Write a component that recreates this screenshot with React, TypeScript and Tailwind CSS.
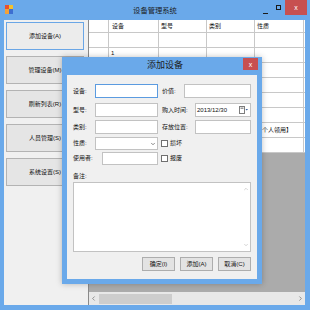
import { ChevronDown, ChevronLeft, ChevronRight, ChevronUp } from 'lucide-react'

const font = "font-['Liberation_Sans','Noto_Sans_CJK_SC',sans-serif]"

function SideButton({ label, focused }: { label: string; focused?: boolean }) {
	return (
		<div
			className={
				focused
					? 'h-[28px] w-[78px] flex items-center justify-center text-[6px] text-[#111] border border-[#6aa6e6] bg-[#ececec]'
					: 'h-[28px] w-[78px] flex items-center justify-center text-[6px] text-[#111] border border-[#b3b3b3] bg-[#e5e5e5]'
			}
		>
			{label}
		</div>
	)
}

function GridRow({ a, d, e }: { a?: string; d?: string; e?: string }) {
	return (
		<div className="flex h-[15px] shrink-0 border-b border-[#c8c8c8] bg-white text-[6px] text-[#111]">
			<div className="w-[20px] shrink-0 border-r border-[#c8c8c8]" />
			<div className="w-[50px] shrink-0 border-r border-[#c8c8c8] pl-[2px] leading-[10px]">{a}</div>
			<div className="w-[48px] shrink-0 border-r border-[#c8c8c8]" />
			<div className="w-[48px] shrink-0 border-r border-[#c8c8c8]" />
			<div className="w-[49px] shrink-0 border-r border-[#c8c8c8] pl-[1px] flex items-center whitespace-nowrap overflow-hidden">
				{d}
			</div>
			<div className="flex-1 flex items-center pl-[1px] whitespace-nowrap overflow-hidden">{e}</div>
		</div>
	)
}

function Input({ w, focused, h = 'h-[14px]' }: { w: string; focused?: boolean; h?: string }) {
	return (
		<div
			className={`${w} ${h} shrink-0 bg-white border ${focused ? 'border-[#5b9be0]' : 'border-[#c2c2c2]'}`}
		/>
	)
}

function Check({ label }: { label: string }) {
	return (
		<div className="flex items-center ml-[3px]">
			<div className="w-[7px] h-[7px] bg-white border border-[#6f6f6f]" />
			<span className="ml-[2px]">{label}</span>
		</div>
	)
}

function DlgButton({ label }: { label: string }) {
	return (
		<div className="w-[33px] h-[14px] flex items-center justify-center border border-[#adadad] bg-[#e3e3e3] text-[6px]">
			{label}
		</div>
	)
}

function AddDialog() {
	return (
		<div className="absolute left-[62px] top-[57px] w-[200px] h-[227px] bg-[#6aa9ea] flex flex-col px-[5px] pb-[5px] shadow-[0_0_6px_rgba(0,0,0,0.25)]">
			<div className="h-[18px] shrink-0 flex items-center relative">
				<div className="flex-1 text-center text-[9px] text-[#1b1b1b] pl-[6px]">添加设备</div>
				<div className="absolute right-[-1px] top-[1px] w-[15px] h-[12px] bg-[#c75050] flex items-center justify-center text-white text-[7px] leading-none">
					x
				</div>
			</div>
			<div className="flex-1 bg-[#f0f0f0] px-[6px] pt-[9px] flex flex-col text-[6px] text-[#111]">
				<div className="flex items-center">
					<span className="w-[22px] shrink-0">设备:</span>
					<Input w="w-[63px]" focused />
					<span className="w-[22px] ml-[4px] shrink-0">价值:</span>
					<Input w="w-[67px]" />
				</div>
				<div className="flex items-center mt-[5px]">
					<span className="w-[22px] shrink-0">型号:</span>
					<Input w="w-[63px]" />
					<span className="w-[33px] ml-[4px] shrink-0">购入时间:</span>
					<div className="w-[56px] h-[14px] bg-white border border-[#c2c2c2] flex items-center pl-[1px] pr-[2px]">
						<span className="flex-1 text-[6px]">2013/12/30</span>
						<svg width="9" height="8" viewBox="0 0 9 8">
							<rect x="0.5" y="0.5" width="5" height="7" fill="#fff" stroke="#7d7d7d" />
							<rect x="1.5" y="1.5" width="3" height="1.5" fill="#9a9a9a" />
							<path d="M6.5 3 L9 3 L7.75 4.6 Z" fill="#3a5f9a" />
						</svg>
					</div>
				</div>
				<div className="flex items-center mt-[3px]">
					<span className="w-[22px] shrink-0">类别:</span>
					<Input w="w-[63px]" />
					<span className="w-[33px] ml-[4px] shrink-0">存放位置:</span>
					<Input w="w-[56px]" />
				</div>
				<div className="flex items-center mt-[3px]">
					<span className="w-[22px] shrink-0">性质:</span>
					<div className="w-[63px] h-[13px] shrink-0 bg-white border border-[#c2c2c2] flex items-center justify-end pr-[1px]">
						<ChevronDown size={6} strokeWidth={2.5} className="text-[#444]" />
					</div>
					<Check label="损坏" />
				</div>
				<div className="flex items-center mt-[2px]">
					<span className="w-[29px] shrink-0">使用者:</span>
					<Input w="w-[56px]" h="h-[13px]" />
					<Check label="报废" />
				</div>
				<div className="mt-[7px] h-[8px] leading-[8px]">备注:</div>
				<div className="mt-[2px] w-[178px] h-[70px] bg-white border border-[#c2c2c2] flex justify-end">
					<div className="w-[9px] flex flex-col items-center justify-between py-[3px]">
						<ChevronUp size={6} strokeWidth={2} className="text-[#aaa]" />
						<ChevronDown size={6} strokeWidth={2} className="text-[#aaa]" />
					</div>
				</div>
				<div className="mt-[5px] flex justify-end gap-[5px]">
					<DlgButton label="确定(I)" />
					<DlgButton label="添加(A)" />
					<DlgButton label="取消(C)" />
				</div>
			</div>
		</div>
	)
}

export default function App() {
	return (
		<div className={`${font} w-[310px] h-[310px] bg-[#6aa9ea] flex flex-col relative overflow-hidden`}>
			<div className="h-[20px] shrink-0 grid grid-cols-[1fr_auto_1fr]">
				<div className="pl-[5px] pt-[5px]">
					<svg width="8" height="9" viewBox="0 0 8 9">
						<rect x="0" y="0" width="4" height="4" fill="#e8502e" />
						<rect x="4" y="0" width="4" height="4" fill="#f2c12e" />
						<rect x="0" y="4" width="4" height="5" fill="#f2a23a" />
						<rect x="4" y="4" width="4" height="5" fill="#3d6fd1" />
					</svg>
				</div>
				<div className="text-[7.3px] text-[#1b1b1b] pt-[6px] leading-[9px]">设备管理系统</div>
				<div className="flex justify-end pr-[3px]">
					<div className="w-[14px] h-[15px] flex items-end justify-center pb-[1px]">
						<div className="w-[5px] h-[1.5px] bg-[#1b1b1b]" />
					</div>
					<div className="w-[13px] h-[15px] flex items-start justify-center pt-[5px]">
						<div className="w-[5px] h-[5px] border border-[#1b1b1b]" />
					</div>
					<div className="w-[22px] h-[15px] bg-[#c75050] flex items-center justify-center text-white text-[7px] leading-none">
						x
					</div>
				</div>
			</div>
			<div className="flex-1 flex ml-[4px] mr-[5px] mb-[5px] bg-[#f0f0f0]">
				<div className="w-[84px] shrink-0 flex flex-col gap-[6px] pt-[2px] pl-[2px]">
					<SideButton label="添加设备(A)" focused />
					<SideButton label="管理设备(M)" />
					<SideButton label="刷新列表(R)" />
					<SideButton label="人员管理(S)" />
					<SideButton label="系统设置(S)" />
				</div>
				<div className="flex-1 flex flex-col border-l border-[#8a8a8a] bg-[#ababab] overflow-hidden">
					<div className="flex h-[13px] shrink-0 border-b border-[#c8c8c8] bg-white text-[6px] text-[#111] items-center">
						<div className="w-[20px] h-full shrink-0 border-r border-[#c8c8c8]" />
						<div className="w-[50px] h-full shrink-0 border-r border-[#c8c8c8] pl-[3px] flex items-center">设备</div>
						<div className="w-[48px] h-full shrink-0 border-r border-[#c8c8c8] pl-[2px] flex items-center">型号</div>
						<div className="w-[48px] h-full shrink-0 border-r border-[#c8c8c8] pl-[2px] flex items-center">类别</div>
						<div className="w-[49px] h-full shrink-0 border-r border-[#c8c8c8] pl-[2px] flex items-center">性质</div>
						<div className="flex-1" />
					</div>
					<GridRow />
					<GridRow a="1" />
					<GridRow />
					<GridRow />
					<GridRow />
					<GridRow />
					<GridRow d="【个人领用】" e="记录" />
					<GridRow />
					<div className="flex-1" />
					<div className="h-[13px] shrink-0 bg-[#e8e8e8] flex items-center px-[1px]">
						<ChevronLeft size={7} strokeWidth={2} className="text-[#555]" />
						<div className="w-[73px] h-[10px] bg-[#cdcdcd] ml-[2px]" />
						<div className="flex-1" />
						<ChevronRight size={7} strokeWidth={2} className="text-[#555]" />
					</div>
				</div>
			</div>
			<AddDialog />
		</div>
	)
}
